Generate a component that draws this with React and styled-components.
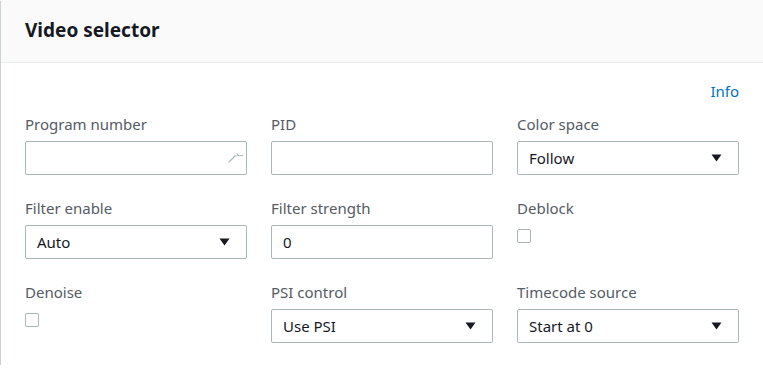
import React from "react";
import styled, { createGlobalStyle } from "styled-components";

const GlobalStyle = createGlobalStyle`
  html, body {
    margin: 0;
    padding: 0;
    background: #ffffff;
  }
  body {
    font-family: "Noto Sans", "Open Sans", Arial, sans-serif;
    -webkit-font-smoothing: antialiased;
  }
`;

const Panel = styled.section`
  margin: 0 0 0 1px;
  width: 786px;
  background: #ffffff;
  box-shadow: 0 1px 1px 0 rgba(0, 28, 36, 0.3), 1px 1px 1px 0 rgba(0, 28, 36, 0.15),
    -1px 1px 1px 0 rgba(0, 28, 36, 0.15);
`;

const Header = styled.header`
  height: 63px;
  box-sizing: border-box;
  padding: 0 24px;
  display: flex;
  align-items: center;
  background: #fafafa;
  border-bottom: 1px solid #eaeded;
`;

const Title = styled.h2`
  margin: 0 0 2px 0;
  font-size: 19px;
  font-weight: 700;
  color: #16191f;
  line-height: 22px;
`;

const Body = styled.div`
  width: 714px;
  padding: 18px 24px 22px 24px;
`;

const InfoRow = styled.div`
  display: flex;
  justify-content: flex-end;
  height: 20px;
  margin-bottom: 12px;
`;

const InfoLink = styled.a`
  font-size: 15px;
  line-height: 20px;
  color: #0073bb;
  text-decoration: none;
`;

const Grid = styled.div`
  display: grid;
  grid-template-columns: repeat(3, 222px);
  column-gap: 24px;
  row-gap: 22px;
`;

const Field = styled.div`
  display: flex;
  flex-direction: column;
`;

const Label = styled.label`
  font-size: 15px;
  line-height: 22px;
  color: #545b64;
  margin-bottom: 6px;
`;

const Box = styled.div`
  height: 34px;
  box-sizing: border-box;
  border: 1px solid #aab7b8;
  border-radius: 2px;
  background: #ffffff;
  display: flex;
  align-items: center;
  justify-content: space-between;
  padding: 0 ${(p) => (p.$tight ? 2 : 16)}px 0 11px;
  font-size: 15px;
  color: #16191f;
`;

const Check = styled.span`
  display: block;
  width: 14px;
  height: 14px;
  box-sizing: border-box;
  margin-top: 4px;
  border: 1px solid #aab7b8;
  border-radius: 2px;
  background: #ffffff;
`;

const Spin = () => (
  <svg width="16" height="12" viewBox="0 0 16 12" fill="none" stroke="#aab7b8" strokeWidth="1.1" strokeLinecap="round">
    <path d="M9 1.5 L10.5 3.5 M6.5 4 L14.5 3.5 M7 4 L1 10" />
  </svg>
);

const Caret = () => (
  <svg width="11" height="8" viewBox="0 0 11 8">
    <path d="M0.5 0.5 H10.5 L5.5 7.5 Z" fill="#16191f" />
  </svg>
);

const Select = ({ value }) => (
  <Box>
    <span>{value}</span>
    <Caret />
  </Box>
);

const fields = [
  { label: "Program number", kind: "number" },
  { label: "PID", kind: "input", value: "" },
  { label: "Color space", kind: "select", value: "Follow" },
  { label: "Filter enable", kind: "select", value: "Auto" },
  { label: "Filter strength", kind: "input", value: "0" },
  { label: "Deblock", kind: "check" },
  { label: "Denoise", kind: "check" },
  { label: "PSI control", kind: "select", value: "Use PSI" },
  { label: "Timecode source", kind: "select", value: "Start at 0" },
];

const Control = ({ kind, value }) => {
  if (kind === "select") return <Select value={value} />;
  if (kind === "check") return <Check />;
  if (kind === "number")
    return (
      <Box $tight>
        <span />
        <Spin />
      </Box>
    );
  return (
    <Box>
      <span>{value}</span>
    </Box>
  );
};

export default function App() {
  return (
    <>
      <GlobalStyle />
      <Panel>
        <Header>
          <Title>Video selector</Title>
        </Header>
        <Body>
          <InfoRow>
            <InfoLink href="#">Info</InfoLink>
          </InfoRow>
          <Grid>
            {fields.map((f) => (
              <Field key={f.label}>
                <Label>{f.label}</Label>
                <Control kind={f.kind} value={f.value} />
              </Field>
            ))}
          </Grid>
        </Body>
      </Panel>
    </>
  );
}
